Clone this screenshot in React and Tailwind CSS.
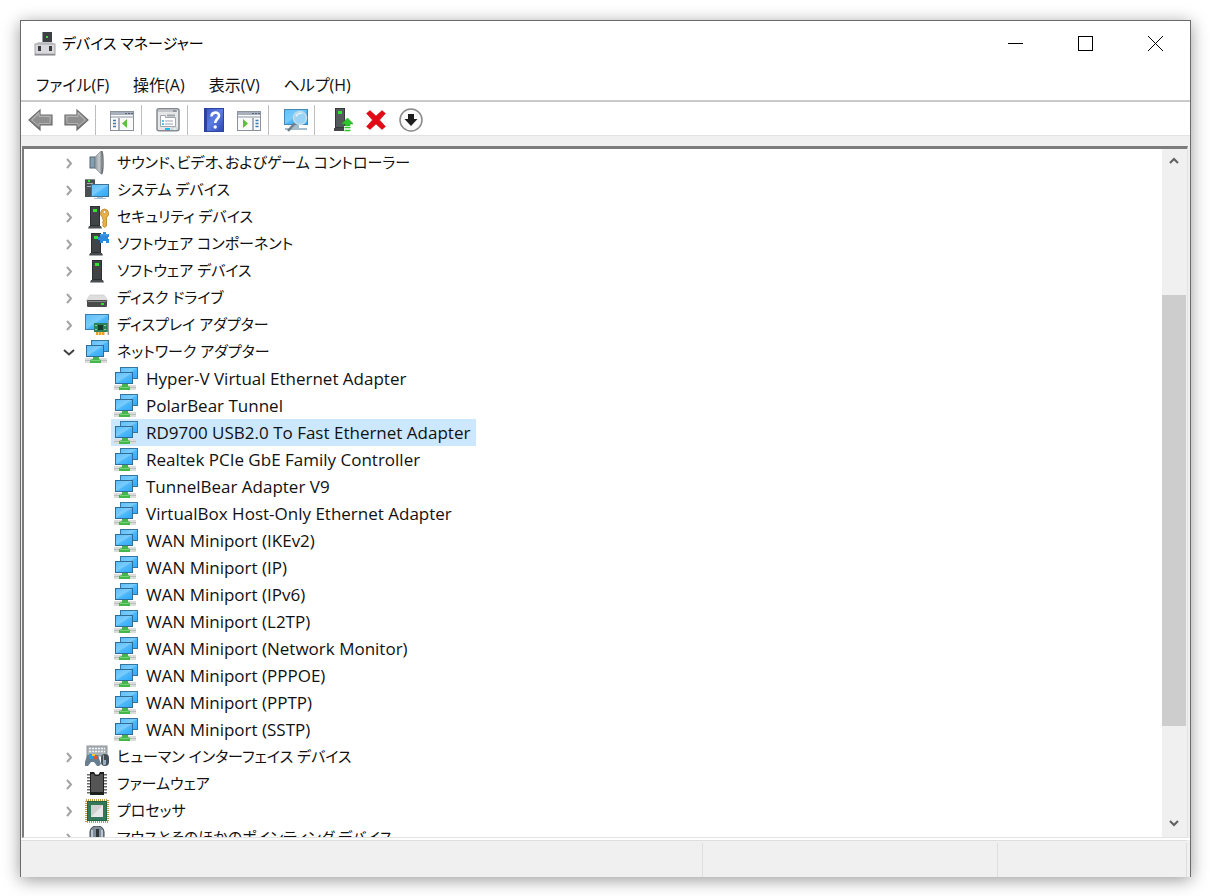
import { useState } from 'react';

const CATEGORIES = [
  { icon: 'sound', label: 'サウンド、ビデオ、およびゲーム コントローラー' },
  { icon: 'system', label: 'システム デバイス' },
  { icon: 'security', label: 'セキュリティ デバイス' },
  { icon: 'component', label: 'ソフトウェア コンポーネント' },
  { icon: 'software', label: 'ソフトウェア デバイス' },
  { icon: 'disk', label: 'ディスク ドライブ' },
  { icon: 'display', label: 'ディスプレイ アダプター' },
  {
    icon: 'network',
    label: 'ネットワーク アダプター',
    children: [
      'Hyper-V Virtual Ethernet Adapter',
      'PolarBear Tunnel',
      'RD9700 USB2.0 To Fast Ethernet Adapter',
      'Realtek PCIe GbE Family Controller',
      'TunnelBear Adapter V9',
      'VirtualBox Host-Only Ethernet Adapter',
      'WAN Miniport (IKEv2)',
      'WAN Miniport (IP)',
      'WAN Miniport (IPv6)',
      'WAN Miniport (L2TP)',
      'WAN Miniport (Network Monitor)',
      'WAN Miniport (PPPOE)',
      'WAN Miniport (PPTP)',
      'WAN Miniport (SSTP)',
    ],
  },
  { icon: 'hid', label: 'ヒューマン インターフェイス デバイス' },
  { icon: 'firmware', label: 'ファームウェア' },
  { icon: 'processor', label: 'プロセッサ' },
  { icon: 'mouse', label: 'マウスとそのほかのポインティング デバイス' },
];

const MENUS = ['ファイル(F)', '操作(A)', '表示(V)', 'ヘルプ(H)'];

function Gradients() {
  return (
    <svg className="absolute h-0 w-0" aria-hidden="true">
      <defs>
        <linearGradient id="screen" x1="0" y1="0" x2="1" y2="1">
          <stop offset="0" stopColor="#5fbffa" />
          <stop offset="0.45" stopColor="#7accfb" />
          <stop offset="0.55" stopColor="#4db8fb" />
          <stop offset="1" stopColor="#33a9f6" />
        </linearGradient>
        <linearGradient id="metal" x1="0" y1="0" x2="0" y2="1">
          <stop offset="0" stopColor="#c4c4c4" />
          <stop offset="1" stopColor="#6f6f6f" />
        </linearGradient>
        <linearGradient id="cone" x1="0" y1="0" x2="1" y2="0">
          <stop offset="0" stopColor="#8d9499" />
          <stop offset="0.6" stopColor="#c6cbce" />
          <stop offset="1" stopColor="#7a8187" />
        </linearGradient>
        <linearGradient id="help" x1="0" y1="0" x2="1" y2="1">
          <stop offset="0" stopColor="#3c55c4" />
          <stop offset="0.5" stopColor="#5c7ce2" />
          <stop offset="1" stopColor="#2a45b0" />
        </linearGradient>
      </defs>
    </svg>
  );
}

function Tower({ x = 4 }) {
  return (
    <g>
      <path d={`M${x} 21h12l1 2.500h-14z`} fill="#4a4d4f" />
      <rect x={x + 1} y="1" width="10" height="20" fill="#2c2f31" />
      <rect x={x + 2} y="2" width="8" height="18" fill="#414446" />
      <rect x={x + 4} y="4" width="4" height="3" fill="#2ee62e" />
    </g>
  );
}

function DeviceIcon({ name }) {
  return (
    <svg viewBox="0 0 24 24" className="h-6 w-6 shrink-0" aria-hidden="true">
      {name === 'sound' && (
        <g>
          <rect x="5" y="6" width="5" height="11" fill="#7fa0b5" stroke="#56656f" />
          <path d="M10 6 16 0h1v23h-1l-6-6z" fill="url(#cone)" stroke="#80868a" strokeWidth="0.6" />
          <path d="M16.500 0c2 2 2 21 0 23" fill="none" stroke="#6d7378" strokeWidth="1.500" />
        </g>
      )}
      {name === 'system' && (
        <g>
          <rect x="0" y="1" width="10" height="18" fill="#4b4f52" />
          <rect x="0" y="1" width="10" height="1" fill="#83888b" />
          <rect x="2" y="5" width="6" height="1" fill="#a9afb2" />
          <rect x="2" y="8" width="4" height="1" fill="#a9afb2" />
          <rect x="3" y="2" width="2" height="2" fill="#2ee62e" />
          <rect x="6" y="6" width="18" height="13" fill="#3d7396" />
          <rect x="7" y="7" width="16" height="11" fill="url(#screen)" />
          <path d="M12 19h6v1h3v1H9v-1h3z" fill="#a9c4d6" />
        </g>
      )}
      {name === 'security' && (
        <g>
          <Tower x={4} />
          <path
            d="M19.500 4a4.500 4.500 0 0 1 2 8.300V21l-2 1.500-2-2 1-1.500-1-1.500 1-2-1-2v-1.300A4.500 4.500 0 0 1 19.500 4z"
            fill="#e9b04a"
            stroke="#b77d1c"
            strokeWidth="0.800"
          />
          <circle cx="19.500" cy="7" r="1.500" fill="#fff" stroke="#b77d1c" strokeWidth="0.600" />
        </g>
      )}
      {name === 'component' && (
        <g>
          <Tower x={5} />
          <path d="M15 2h3V0h3v2h3v3h-1v2h1v4h-3V9h-3v2h-3V8h-2V5h2z" fill="#2d8bdc" />
          <path d="M15 3h8" stroke="#4aa3ea" strokeWidth="1" />
        </g>
      )}
      {name === 'software' && <Tower x={6} />}
      {name === 'disk' && (
        <g>
          <path d="M5 9h14l4 6H1z" fill="#dedede" stroke="#bcbcbc" strokeWidth="0.500" />
          <rect x="2" y="14" width="20" height="7" rx="1" fill="#4b4b4b" />
          <rect x="3" y="15" width="18" height="1" fill="#8a8a8a" />
          <rect x="16" y="17" width="3" height="2" fill="#2ee62e" />
        </g>
      )}
      {name === 'display' && (
        <g>
          <rect x="0" y="1" width="24" height="16" fill="#3a7ea9" />
          <rect x="1" y="2" width="22" height="14" fill="url(#screen)" />
          <rect x="9" y="10" width="14" height="9" fill="#2b8159" />
          <rect x="13" y="12" width="5" height="5" fill="#183b2b" />
          <path d="M10 12.500h2M10 16.500h2M19 12.500h2M19 16.500h2" stroke="#8dd3a5" />
          <path d="M23.300 7v15" stroke="#9b9b9b" strokeWidth="1.400" />
          <path d="M11 20.500h9" stroke="#f0a020" strokeWidth="3" strokeDasharray="2.500 0.500" />
        </g>
      )}
      {name === 'network' && (
        <g>
          <rect x="6" y="0" width="18" height="12" fill="#35759e" />
          <rect x="7" y="1" width="16" height="10" fill="url(#screen)" />
          <rect x="1" y="5" width="18" height="12" fill="#2f6d97" />
          <rect x="2" y="6" width="16" height="10" fill="url(#screen)" />
          <rect x="0" y="18" width="22" height="5" fill="#dcdcdc" />
          <path d="M0 20.500h22" stroke="#bdbdbd" />
          <path d="M8 17h6v2l2 1v3H5v-3l3-1z" fill="#44b64b" />
          <path d="M6 20.500h9" stroke="#73d377" />
        </g>
      )}
      {name === 'hid' && (
        <g>
          <rect x="2" y="1" width="20" height="10" fill="#a9b0b6" stroke="#8d959b" />
          <path d="M4 3.500h16M4 6.500h16" stroke="#f3f5f6" strokeWidth="1.500" strokeDasharray="2 1" />
          <path d="M2 10h11l3 9-2 2h-2l-3-4H6l-3 4H0v-4z" fill="#687e8e" />
          <rect x="4" y="9" width="4" height="5" fill="#1fa0e8" />
          <rect x="9" y="11" width="3" height="3" fill="#e5532d" />
          <rect x="7" y="9" width="3" height="2" fill="#f7c62f" />
          <rect x="16" y="9" width="8" height="12" rx="4" fill="#46525b" />
          <rect x="18" y="10" width="3" height="10" rx="1" fill="#9bb0bf" />
          <path d="M20 10v5" stroke="#252b30" strokeWidth="1.500" />
        </g>
      )}
      {name === 'firmware' && (
        <g>
          <path d="M3.500 2v20M20.500 2v20" stroke="#6a6a6a" strokeWidth="3" strokeDasharray="1.500 1.500" />
          <path d="M5 0h4l1.500 2.500h3L15 0h4v23H5z" fill="#1f1f1f" />
          <path d="M6 2h2.500l1.500 2h4l1.500-2H18v18H6z" fill="#555" />
        </g>
      )}
      {name === 'processor' && (
        <g>
          <rect x="1" y="1" width="22" height="22" fill="none" stroke="#c49b3f" strokeWidth="2" strokeDasharray="1 1" />
          <rect x="2" y="2" width="20" height="20" fill="#236644" />
          <rect x="3" y="3" width="18" height="18" fill="#34785a" />
          <rect x="6" y="6" width="12" height="12" fill="#cfcfcf" />
          <path d="M6 18 18 6v12z" fill="#e9e9e9" />
        </g>
      )}
      {name === 'mouse' && (
        <g>
          <rect x="5" y="0" width="14" height="24" rx="6" fill="#7e8d99" stroke="#3c4348" />
          <path d="M7 4v12M17 4v12" stroke="#b6c5d1" strokeWidth="2" />
          <rect x="11" y="3" width="3" height="9" fill="#30363a" />
        </g>
      )}
    </svg>
  );
}

function ArrowIcon({ flip }) {
  return (
    <svg viewBox="0 0 26 24" className="h-6 w-[26px]" aria-hidden="true">
      <path
        d={flip ? 'M25 12 14 2v5H2v10h12v5z' : 'M1 12 12 2v5h12v10H12v5z'}
        fill="url(#metal)"
        stroke="#6b6b6b"
        strokeWidth="1.200"
      />
      <path
        d={flip ? 'M22 12l-7-6.500V8.500H4v7h11v3z' : 'M4 12l7-6.500V8.500h11v7H11v3z'}
        fill="#8f8f8f"
        stroke="#b9b9b9"
        strokeWidth="0.800"
      />
    </svg>
  );
}

function PaneIcon({ flip }) {
  return (
    <svg viewBox="0 0 24 24" className="h-6 w-6" aria-hidden="true">
      <rect x="0.500" y="3.500" width="23" height="19" fill="#fafafa" stroke="#8b929b" />
      <rect x="1" y="4" width="22" height="3" fill="#a7b0bc" />
      <path d="M15 5.500h2M18 5.500h2M21 5.500h2" stroke="#58677a" />
      <path d="M1 9h22" stroke="#c2c8cf" strokeWidth="2" />
      {flip ? (
        <g>
          <rect x="15" y="10" width="2" height="12" fill="#a7b0bc" />
          <path d="M18.500 12.500h3M18.500 15.500h3M18.500 18.500h3" stroke="#3b79b8" strokeWidth="1.500" />
          <path d="M6 11v9l5-4.500z" fill="#5cc23c" />
        </g>
      ) : (
        <g>
          <rect x="8" y="10" width="2" height="12" fill="#a7b0bc" />
          <path d="M3 12.500h3M3 15.500h3M3 18.500h3" stroke="#3b79b8" strokeWidth="1.500" />
          <path d="M17 11v9l-5-4.500z" fill="#5cc23c" />
        </g>
      )}
    </svg>
  );
}

function PropertiesIcon() {
  return (
    <svg viewBox="0 0 24 24" className="h-6 w-6" aria-hidden="true">
      <rect x="1" y="0.800" width="22" height="22" rx="2" fill="#e6e7e8" stroke="#85898d" strokeWidth="1.500" />
      <path d="M2 3h18" stroke="#b7bbc0" strokeWidth="1.500" />
      <path d="M17 3h4" stroke="#5d6670" />
      <path d="M4.500 7.500h5v2h10v9h-15z" fill="#fff" stroke="#a1a7ad" />
      <path d="M11 7.500h8" stroke="#a1a7ad" strokeWidth="2" />
      <path d="M6 13h2M6 16h2" stroke="#28aee0" strokeWidth="1.500" />
      <path d="M9 13h8M9 16h8" stroke="#9fa4a9" strokeWidth="1.200" />
      <rect x="9" y="20" width="5" height="2" fill="#22b8e8" />
      <rect x="16" y="20" width="5" height="2" fill="#fff" stroke="#a1a7ad" strokeWidth="0.500" />
    </svg>
  );
}

function HelpIcon() {
  return (
    <svg viewBox="0 0 20 24" className="h-6 w-5" aria-hidden="true">
      <rect x="0.500" y="0.500" width="19" height="23" fill="url(#help)" stroke="#2c459f" />
      <rect x="0" y="0" width="3" height="24" fill="#2b429f" />
      <path
        d="M7.500 8.500c0-5 7.500-5 7.500-1 0 3.500-3.800 3.500-3.800 7.500"
        fill="none"
        stroke="#fff"
        strokeWidth="2.600"
      />
      <circle cx="11.200" cy="19" r="1.700" fill="#fff" />
    </svg>
  );
}

function ScanIcon() {
  return (
    <svg viewBox="0 0 26 24" className="h-6 w-[26px]" aria-hidden="true">
      <rect x="2" y="1" width="24" height="16" fill="#4388b5" />
      <rect x="3" y="2" width="22" height="14" fill="url(#screen)" />
      <path d="M11 17h6v3h8v2H3v-2h8z" fill="#a5bccb" />
      <path d="M13 15 6 23" stroke="#6f7e88" strokeWidth="2.500" />
      <circle cx="18" cy="10" r="6.500" fill="#9bd3f5" stroke="#c4dce9" strokeWidth="1.500" />
      <path d="M14 8.500c1-3 4-3.500 6-3" fill="none" stroke="#e2f4fe" strokeWidth="1.500" />
    </svg>
  );
}

function UpdateIcon() {
  return (
    <svg viewBox="-6 0 24 24" className="h-6 w-6" aria-hidden="true">
      <path d="M-1 20h12l1 3H-1z" fill="#45484a" />
      <rect x="0" y="0" width="10" height="20" fill="#33383a" />
      <rect x="1" y="1" width="8" height="18" fill="#54595b" />
      <rect x="3" y="3" width="4" height="3" fill="#2ee62e" />
      <path d="M12.500 10l6 6H15v2h-5v-2H6.500z" fill="#2cc52c" stroke="#209b22" strokeWidth="0.500" />
      <path d="M9 19.500h7M9 22.500h7" stroke="#fff" strokeWidth="3" />
      <path d="M9.500 19.500h6M9.500 22.500h6" stroke="#2cc52c" strokeWidth="1.500" />
    </svg>
  );
}

function UninstallIcon() {
  return (
    <svg viewBox="0 0 20 20" className="h-5 w-5" aria-hidden="true">
      <path
        d="M4 0.500 10 6l6-5.500 3.500 3L13.500 10l6 6.500-3.500 3L10 14l-6 5.500-3.500-3L6.500 10l-6-6.500z"
        fill="#e30b17"
        stroke="#c00a13"
        strokeWidth="0.500"
      />
    </svg>
  );
}

function DisableIcon() {
  return (
    <svg viewBox="0 0 24 24" className="h-6 w-6" aria-hidden="true">
      <circle cx="12" cy="12" r="11" fill="#fafafa" stroke="#8a8a8a" strokeWidth="1.500" />
      <path d="M9 6h6v5h3.500L12 18l-6.500-7H9z" fill="#1d1d1d" />
    </svg>
  );
}

function ManagerIcon() {
  return (
    <svg viewBox="0 0 22 24" className="h-6 w-[22px]" aria-hidden="true">
      <rect x="9" y="0" width="9" height="12" fill="#3c4042" />
      <path d="M9 0h-1v11h1z" fill="#989898" />
      <rect x="12" y="4" width="2" height="2" fill="#2ee62e" />
      <path d="M4 10h14l2 2H2z" fill="#c9c9cc" />
      <rect x="1" y="12" width="20" height="11" fill="#d9d9dd" stroke="#a4a4a9" />
      <rect x="4" y="14" width="3" height="5" fill="#3b3b3b" />
      <rect x="15" y="14" width="3" height="5" fill="#3b3b3b" />
      <path d="M1 22.500h20" stroke="#8c8c90" strokeWidth="1.500" />
    </svg>
  );
}

function Chevron({ open }) {
  return (
    <svg viewBox="0 0 12 12" className="h-3 w-3" fill="none" strokeWidth="2" aria-hidden="true">
      {open ? <path d="M1 4l5 4.500L11 4" stroke="#404040" /> : <path d="M4 2l4 4.500L4 11" stroke="#a3a3a3" />}
    </svg>
  );
}

function ToolButton({ label, children }) {
  return (
    <button type="button" aria-label={label} className="flex h-8 w-[35px] items-center justify-center pt-[2px] hover:bg-sky-100">
      {children}
    </button>
  );
}

function Separator() {
  return <div className="mr-2 ml-[2px] h-[30px] w-px self-end bg-[#bdbdbd]" />;
}

function TitleBar() {
  const button = 'flex h-full w-[70px] items-center justify-center hover:bg-gray-200';
  return (
    <header className="flex h-[45px] shrink-0 items-center pl-[13px]">
      <ManagerIcon />
      <h1 className="ml-[6px] flex-1 text-[15px] text-black">デバイス マネージャー</h1>
      <button type="button" aria-label="最小化" className={button}>
        <svg viewBox="0 0 15 15" className="h-[15px] w-[15px]" shapeRendering="crispEdges">
          <path d="M0 7.500h15" stroke="#000" />
        </svg>
      </button>
      <button type="button" aria-label="最大化" className={button}>
        <svg viewBox="0 0 15 15" className="h-[15px] w-[15px]" shapeRendering="crispEdges">
          <rect x="0.500" y="0.500" width="14" height="14" fill="none" stroke="#000" />
        </svg>
      </button>
      <button type="button" aria-label="閉じる" className={button}>
        <svg viewBox="0 0 15 15" className="h-[15px] w-[15px]">
          <path d="M0 0l15 15M15 0L0 15" stroke="#000" />
        </svg>
      </button>
    </header>
  );
}

function Toolbar() {
  return (
    <div className="flex h-[34px] shrink-0 items-end border-b border-[#e3e3e3] pl-[2px]">
      <ToolButton label="戻る"><ArrowIcon /></ToolButton>
      <ToolButton label="進む"><ArrowIcon flip /></ToolButton>
      <Separator />
      <ToolButton label="コンソール ツリー"><PaneIcon /></ToolButton>
      <Separator />
      <ToolButton label="プロパティ"><PropertiesIcon /></ToolButton>
      <Separator />
      <ToolButton label="ヘルプ"><HelpIcon /></ToolButton>
      <ToolButton label="操作ウィンドウ"><PaneIcon flip /></ToolButton>
      <Separator />
      <ToolButton label="ハードウェア変更のスキャン"><ScanIcon /></ToolButton>
      <Separator />
      <ToolButton label="ドライバーの更新"><UpdateIcon /></ToolButton>
      <ToolButton label="アンインストール"><UninstallIcon /></ToolButton>
      <ToolButton label="無効にする"><DisableIcon /></ToolButton>
    </div>
  );
}

function Category({ category, selected, onSelect }) {
  const [open, setOpen] = useState(Boolean(category.children));

  return (
    <li>
      <div className="flex h-[27px] items-center pl-[39px]">
        <button
          type="button"
          aria-label={category.label}
          aria-expanded={open}
          onClick={() => setOpen(!open)}
          className="mr-[10px] shrink-0"
        >
          <Chevron open={open} />
        </button>
        <DeviceIcon name={category.icon} />
        <span className="ml-2 text-[15px] whitespace-nowrap">{category.label}</span>
      </div>
      {open && category.children && (
        <ul className="pl-[87px]">
          {category.children.map((device) => (
            <li key={device} className="flex">
              <button
                type="button"
                onClick={() => onSelect(device)}
                className={
                  device === selected
                    ? 'flex h-[27px] items-center bg-[#cce8ff] pr-[6px] pl-[3px]'
                    : 'flex h-[27px] items-center pr-[6px] pl-[3px]'
                }
              >
                <DeviceIcon name="network" />
                <span className="ml-2 text-[17px] whitespace-nowrap">{device}</span>
              </button>
            </li>
          ))}
        </ul>
      )}
    </li>
  );
}

function ScrollBar() {
  return (
    <div className="flex w-[25px] shrink-0 flex-col bg-[#f0f0f0] pr-px">
      <button type="button" aria-label="上へ" className="flex h-6 shrink-0 items-center justify-center">
        <svg viewBox="0 0 10 8" className="h-2 w-[10px]">
          <path d="M1 6l4-4 4 4" fill="none" stroke="#606060" strokeWidth="2" />
        </svg>
      </button>
      <div className="flex flex-1 flex-col">
        <div className="flex-[122]" />
        <div className="flex-[431] bg-[#cdcdcd]" />
        <div className="flex-[83]" />
      </div>
      <button type="button" aria-label="下へ" className="flex h-7 shrink-0 items-center justify-center">
        <svg viewBox="0 0 10 8" className="h-2 w-[10px]">
          <path d="M1 2l4 4 4-4" fill="none" stroke="#606060" strokeWidth="2" />
        </svg>
      </button>
    </div>
  );
}

function App() {
  const [selected, setSelected] = useState('RD9700 USB2.0 To Fast Ethernet Adapter');

  return (
    <div className="flex h-screen flex-col bg-white p-5 pb-[19px] font-['Open_Sans','Noto_Sans_CJK_JP',sans-serif] text-base text-[#111] [font-feature-settings:'palt']">
      <Gradients />
      <main className="flex min-h-0 flex-1 flex-col border border-b-0 border-[#6b6b6b] bg-white shadow-[0_3px_16px_rgba(0,0,0,0.4)]">
        <TitleBar />
        <nav className="flex h-9 shrink-0 items-center gap-6 border-b-2 border-[#c8cacc] pt-[3px] pl-[15px]">
          {MENUS.map((menu) => (
            <button key={menu} type="button" className="whitespace-nowrap">
              {menu}
            </button>
          ))}
        </nav>
        <Toolbar />
        <div className="flex min-h-0 flex-1 flex-col bg-[#f0f0f0] pt-[10px]">
          <div className="mr-[2px] ml-px flex min-h-0 flex-1 border-t-[3px] border-r border-b border-l-2 border-t-[#7c7c7c] border-r-[#e3e3e3] border-b-[#e3e3e3] border-l-[#7c7c7c] bg-white">
            <ul className="min-w-0 flex-1 overflow-hidden">
              {CATEGORIES.map((category) => (
                <Category
                  key={category.label}
                  category={category}
                  selected={selected}
                  onSelect={setSelected}
                />
              ))}
            </ul>
            <ScrollBar />
          </div>
        </div>
        <footer className="flex h-[39px] shrink-0 border-t-2 border-white bg-[#f0f0f0] pr-[3px]">
          <div className="flex flex-1 border-t border-[#dedede] pt-[2px]">
            <div className="flex-[683] border-r border-[#dedede]" />
            <div className="flex-[295] border-r border-[#dedede]" />
            <div className="flex-[188] border-r border-[#dedede]" />
          </div>
        </footer>
      </main>
    </div>
  );
}

export default App;
